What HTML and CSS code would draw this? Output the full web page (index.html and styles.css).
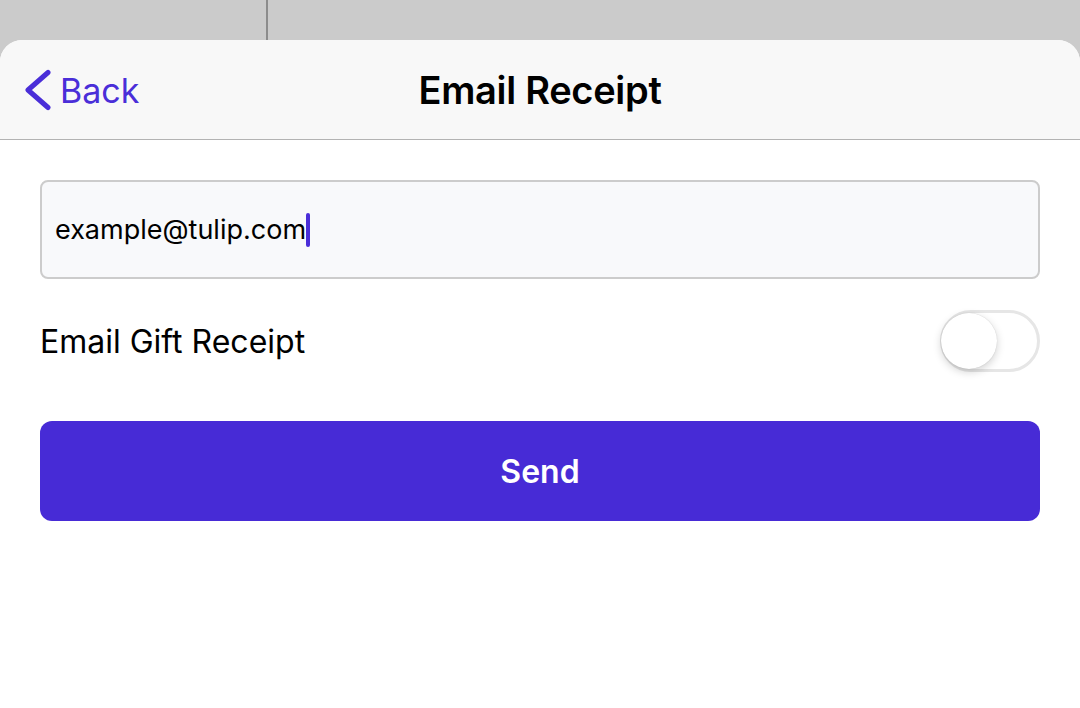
FILE: index.html
```html
<!DOCTYPE html>
<html>
<head>
    <title>Email Receipt</title>
    <link rel="stylesheet" href="styles.css">
</head>
<body>
    <div class="backdrop">
        <div class="backdrop-split"></div>
    </div>

    <div class="sheet">
        <div class="nav-bar">
            <a class="back-link" href="#">
                <svg class="chevron" width="30" height="42" viewBox="0 0 30 42">
                    <path d="M26 3.5 L6 21 L26 38.5" fill="none" stroke="#4a2ed8" stroke-width="5" stroke-linecap="round" stroke-linejoin="round"/>
                </svg>
                <span>Back</span>
            </a>
            <h1 class="nav-title">Email Receipt</h1>
        </div>

        <div class="content">
            <div class="email-field">
                <span class="email-value">example@tulip.com</span><span class="caret"></span>
            </div>

            <div class="toggle-row">
                <span class="toggle-label">Email Gift Receipt</span>
                <div class="toggle">
                    <div class="toggle-knob"></div>
                </div>
            </div>

            <button class="send-button">Send</button>
        </div>
    </div>
</body>
</html>
```

FILE: styles.css
```css
body {
    margin: 0;
    width: 1080px;
    height: 708px;
    overflow: hidden;
    background-color: #cbcbcb;
    font-family: Inter, "Noto Sans", sans-serif;
}

.backdrop {
    height: 40px;
    display: flex;
}

.backdrop-split {
    width: 266px;
    border-right: 2px solid #8c8c8c;
}

.sheet {
    height: 668px;
    background: white;
    border-radius: 22px 22px 0 0;
    overflow: hidden;
}

.nav-bar {
    height: 99px;
    background-color: #f8f8f8;
    border-bottom: 1px solid #b3b3b3;
    display: flex;
    align-items: center;
    justify-content: center;
    position: relative;
}

.back-link {
    position: absolute;
    left: 22px;
    top: 29px;
    display: flex;
    align-items: center;
    gap: 8px;
    color: #4a2ed8;
    text-decoration: none;
    font-size: 34px;
}

.nav-title {
    margin: 0;
    font-size: 38px;
    font-weight: 600;
    color: #000;
    letter-spacing: -0.3px;
}

.content {
    padding: 40px 40px 0;
}

.email-field {
    height: 99px;
    box-sizing: border-box;
    border: 2px solid #cccccc;
    border-radius: 8px;
    background-color: #f8f9fb;
    display: flex;
    align-items: center;
    padding-left: 13px;
}

.email-value {
    font-size: 27px;
    color: #000;
}

.caret {
    display: inline-block;
    width: 4px;
    height: 34px;
    border-radius: 2px;
    background-color: #4a2ed8;
}

.toggle-row {
    height: 62px;
    margin-top: 31px;
    display: flex;
    align-items: center;
    justify-content: space-between;
}

.toggle-label {
    font-size: 32px;
    color: #000;
}

.toggle {
    width: 100px;
    height: 62px;
    box-sizing: border-box;
    border: 3px solid #e6e6e6;
    border-radius: 31px;
    background: white;
    display: flex;
    align-items: center;
}

.toggle-knob {
    width: 56px;
    height: 56px;
    margin-left: -2px;
    border-radius: 50%;
    background: white;
    box-shadow: 0 3px 8px rgba(0,0,0,0.18), 0 0 1px rgba(0,0,0,0.2);
}

.send-button {
    display: block;
    width: 100%;
    height: 100px;
    margin-top: 49px;
    border: none;
    border-radius: 12px;
    background-color: #472bd6;
    color: white;
    font-family: Inter, "Noto Sans", sans-serif;
    font-size: 32px;
    font-weight: 600;
}
```
